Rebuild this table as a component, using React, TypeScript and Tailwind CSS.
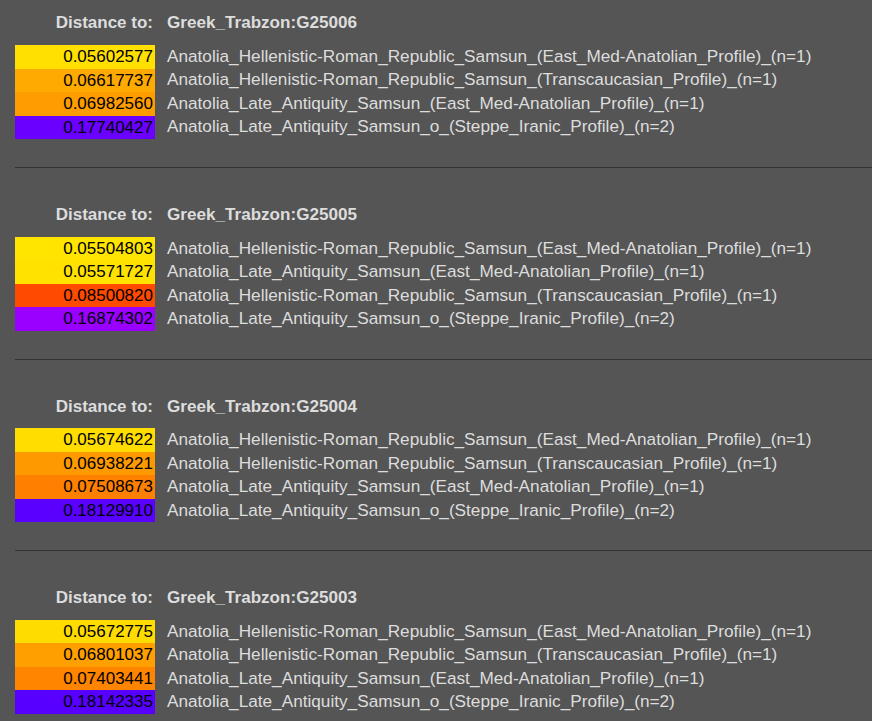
import React from "react";

type Row = { v: string; c: string; name: string };
type Block = { target: string; rows: Row[] };

const HR_E = "Anatolia_Hellenistic-Roman_Republic_Samsun_(East_Med-Anatolian_Profile)_(n=1)";
const HR_T = "Anatolia_Hellenistic-Roman_Republic_Samsun_(Transcaucasian_Profile)_(n=1)";
const LA_E = "Anatolia_Late_Antiquity_Samsun_(East_Med-Anatolian_Profile)_(n=1)";
const LA_S = "Anatolia_Late_Antiquity_Samsun_o_(Steppe_Iranic_Profile)_(n=2)";

const blocks: Block[] = [
  {
    target: "Greek_Trabzon:G25006",
    rows: [
      { v: "0.05602577", c: "#FFE000", name: HR_E },
      { v: "0.06617737", c: "#FFAA00", name: HR_T },
      { v: "0.06982560", c: "#FF9C00", name: LA_E },
      { v: "0.17740427", c: "#6A00FF", name: LA_S },
    ],
  },
  {
    target: "Greek_Trabzon:G25005",
    rows: [
      { v: "0.05504803", c: "#FFE500", name: HR_E },
      { v: "0.05571727", c: "#FFE200", name: LA_E },
      { v: "0.08500820", c: "#FF4A00", name: HR_T },
      { v: "0.16874302", c: "#9900FF", name: LA_S },
    ],
  },
  {
    target: "Greek_Trabzon:G25004",
    rows: [
      { v: "0.05674622", c: "#FFDD00", name: HR_E },
      { v: "0.06938221", c: "#FF9900", name: HR_T },
      { v: "0.07508673", c: "#FF8000", name: LA_E },
      { v: "0.18129910", c: "#5A00FF", name: LA_S },
    ],
  },
  {
    target: "Greek_Trabzon:G25003",
    rows: [
      { v: "0.05672775", c: "#FFDC00", name: HR_E },
      { v: "0.06801037", c: "#FF9F00", name: HR_T },
      { v: "0.07403441", c: "#FF8400", name: LA_E },
      { v: "0.18142335", c: "#5800FF", name: LA_S },
    ],
  },
];

export default function App() {
  return (
    <div
      className="w-[872px] h-[721px] overflow-hidden bg-[#555555] pl-[15px] pt-[11px] text-[17px] text-[#dddddd]"
      style={{ fontFamily: '"Liberation Sans", Arial, sans-serif' }}
    >
      {blocks.map((b, i) => (
        <div key={i} className={i === 0 ? "" : "mt-[34.67px]"}>
          <div className="flex h-[24px] items-center font-bold">
            <div className="w-[140px] pr-[2px] text-right">Distance to:</div>
            <div className="pl-[12px] text-[17.1px]">{b.target}</div>
          </div>
          <div className="mt-[10px]">
            {b.rows.map((r, j) => (
              <div key={j} className="flex h-[23.5px] items-center">
                <div
                  className="flex h-full w-[140px] items-center justify-end pr-[2px] text-black"
                  style={{ backgroundColor: r.c }}
                >
                  {r.v}
                </div>
                <div className="whitespace-nowrap pl-[12px] text-[17.2px]">{r.name}</div>
              </div>
            ))}
          </div>
          {i < blocks.length - 1 && <div className="mt-[28px] h-px bg-[#333333]" />}
        </div>
      ))}
    </div>
  );
}
